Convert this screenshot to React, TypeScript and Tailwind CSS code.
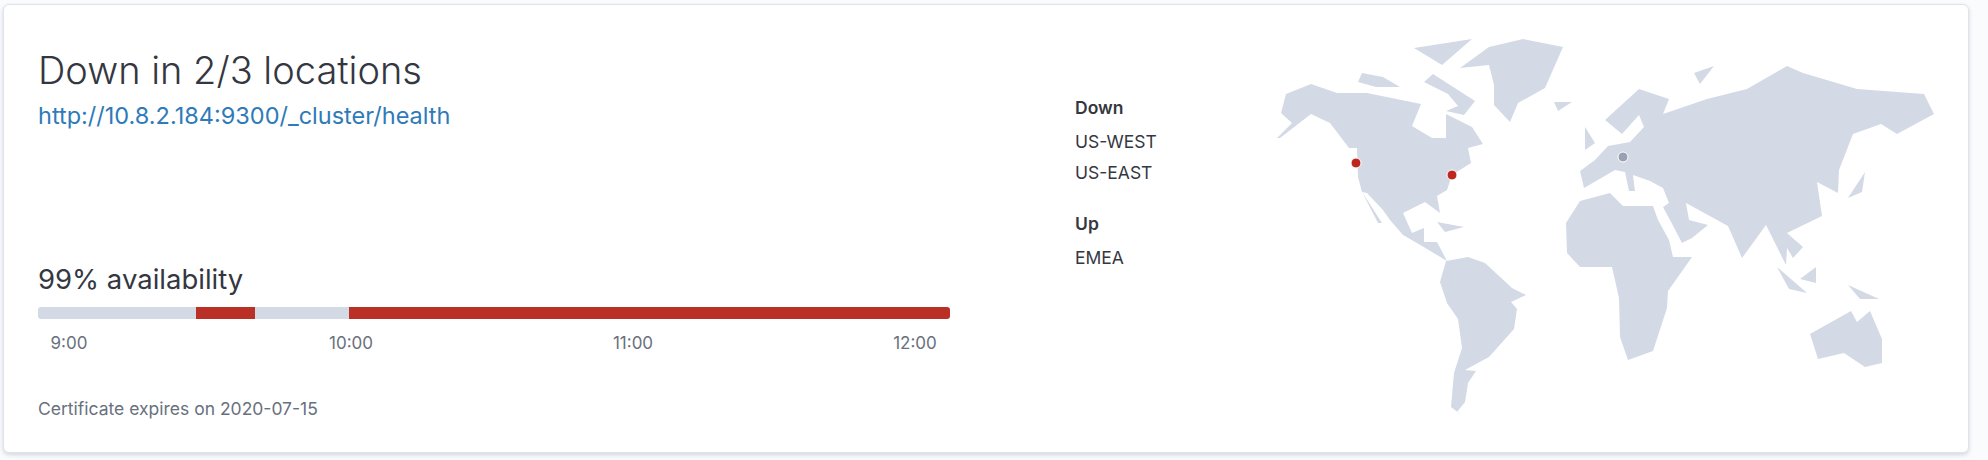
const land = [
  // north america
  "1277,138 1292,123 1281,113 1286,94 1311,84 1337,93 1367,93 1421,104 1412,126 1432,138 1446,138 1446,114 1472,127 1483,144 1468,148 1471,163 1452,175 1447,190 1437,196 1440,213 1425,202 1403,213 1412,233 1424,228 1424,242 1437,242 1447,261 1422,246 1403,235 1390,220 1383,210 1367,193 1362,192 1358,177 1357,148 1349,148 1330,123 1311,114 1280,138",
  // baja
  "1362,192 1382,223 1378,223",
  // arctic
  "1362,73 1383,77 1400,87 1376,87 1358,82",
  "1414,48 1472,39 1442,65",
  "1433,74 1475,101 1464,115 1446,111 1458,106 1448,94 1424,82",
  // greenland, iceland, uk
  "1460,68 1489,47 1523,39 1563,47 1545,88 1518,103 1510,122 1494,105 1494,85 1489,65",
  "1554,102 1572,102 1558,111",
  "1585,127 1595,143 1585,150",
  // caribbean
  "1437,222 1464,227 1445,232",
  // south america
  "1446,261 1468,257 1485,263 1512,288 1526,295 1511,302 1517,309 1514,329 1489,357 1465,370 1476,371 1468,383 1465,402 1457,412 1463,416 1451,407 1454,373 1462,348 1458,319 1447,303 1440,282",
  // eurasia
  "1608,146 1630,142 1644,127 1639,115 1622,134 1605,120 1639,89 1669,99 1663,114 1707,99 1747,89 1787,66 1803,73 1857,89 1924,94 1934,114 1897,134 1881,124 1853,134 1839,170 1838,193 1817,182 1822,216 1787,233 1803,247 1793,258 1787,248 1786,265 1766,225 1742,258 1728,226 1686,203 1689,220 1708,225 1692,238 1682,243 1670,220 1663,207 1669,203 1663,188 1650,181 1633,175 1635,191 1629,191 1625,172 1615,170 1584,188 1580,171 1595,160",
  "1694,73 1714,66 1700,84",
  "1865,172 1862,192 1848,198",
  // africa
  "1610,193 1580,201 1566,223 1567,253 1580,267 1612,267 1619,298 1620,337 1628,360 1653,351 1667,308 1668,291 1692,257 1673,257 1669,240 1658,220 1653,206 1623,206",
  // asia islands and australia
  "1777,267 1807,293 1789,289",
  "1800,279 1816,267 1816,283",
  "1848,285 1879,299 1860,299",
  "1810,334 1851,311 1857,322 1870,311 1882,339 1882,363 1865,367 1844,353 1818,359",
];

const pins = [
  { cx: 1356, cy: 163, fill: "#bd271e" },
  { cx: 1452, cy: 175, fill: "#bd271e" },
  { cx: 1623, cy: 157, fill: "#98a2b3" },
];

const ticks = ["9:00", "10:00", "11:00", "12:00"];

function WorldMap() {
  return (
    <svg viewBox="1270 36 670 390" className="w-[670px] h-[390px] shrink-0 mt-[31px] ml-[25px]">
      {land.map((points) => (
        <polygon key={points} points={points} fill="#d3dae6" />
      ))}
      {pins.map((p) => (
        <circle key={p.cx} cx={p.cx} cy={p.cy} r="5" fill={p.fill} stroke="#fff" strokeWidth="1" />
      ))}
    </svg>
  );
}

export default function App() {
  return (
    <div className="w-[1988px] h-[460px] bg-[#fafbfd] pt-[4px] pl-[3px] font-['Inter',sans-serif] text-[#343741]">
      <div className="w-[1966px] h-[449px] bg-white rounded-[6px] border border-[#e0e4ea] shadow-[0_2px_4px_rgba(152,162,179,0.4)] flex">
        <div className="w-[912px] ml-[34px] shrink-0 flex flex-col">
          <h1 className="text-[38px] leading-[42px] font-light mt-[44px]">Down in 2/3 locations</h1>
          <a className="text-[23.5px] leading-[28px] text-[#2f7ab8] mt-[11px]">
            http://10.8.2.184:9300/_cluster/health
          </a>
          <h2 className="text-[27.5px] leading-[32px] mt-[133px]">99% availability</h2>
          <div className="flex h-[12px] rounded-[3px] overflow-hidden mt-[12px]">
            <div className="w-[158px] bg-[#d3dae6]" />
            <div className="w-[59px] bg-[#bb3026]" />
            <div className="w-[94px] bg-[#d3dae6]" />
            <div className="flex-1 bg-[#bb3026]" />
          </div>
          <div className="flex justify-between pl-[1px] pr-[5px] mt-[14px] text-[17px] leading-[20px] text-[#69707d]">
            {ticks.map((t) => (
              <span key={t} className="w-[60px] text-center">
                {t}
              </span>
            ))}
          </div>
          <p className="text-[17.5px] leading-[20px] text-[#69707d] mt-[46px]">Certificate expires on 2020-07-15</p>
        </div>
        <div className="w-[170px] ml-[125px] shrink-0 mt-[91px] text-[17.5px] leading-[31px]">
          <h3 className="font-semibold leading-[24px]">Down</h3>
          <p className="mt-[6px]">US-WEST</p>
          <p>US-EAST</p>
          <h3 className="font-semibold leading-[24px] mt-[24px]">Up</h3>
          <p className="mt-[6px]">EMEA</p>
        </div>
        <WorldMap />
      </div>
    </div>
  );
}
